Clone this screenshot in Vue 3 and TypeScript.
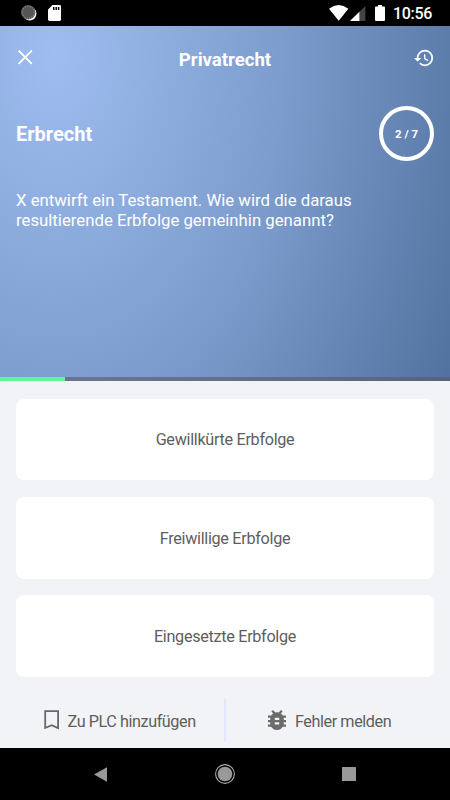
<script setup lang="ts">
import { ref } from 'vue'

const answers = ref<string[]>([
  'Gewillkürte Erbfolge',
  'Freiwillige Erbfolge',
  'Eingesetzte Erbfolge',
])
const progress = 14.5
</script>

<template>
  <div class="screen">
    <header class="status">
      <div class="status-left">
        <svg width="16" height="16" viewBox="0 0 16 16">
          <circle cx="8.7" cy="8.6" r="6.8" fill="#fff" />
          <circle cx="7.2" cy="7.2" r="7.2" fill="#555" />
          <circle cx="7.2" cy="7.2" r="6" fill="none" stroke="#888" stroke-width="1.1" stroke-dasharray="1.2 1.2" />
        </svg>
        <svg width="13" height="16" viewBox="0 0 13 16">
          <path d="M4.5 0H11.6Q13 0 13 1.4V14.6Q13 16 11.6 16H1.4Q0 16 0 14.6V4.5Z" fill="#fff" />
          <path d="M5.7 2V5M8.2 2V5M10.6 2V5" stroke="#000" stroke-width="1.5" />
        </svg>
      </div>
      <div class="status-right">
        <svg class="wifi" width="20" height="16" viewBox="0 0 20 16">
          <path d="M0 3.7Q9.7-3.5 19.4 3.7L9.7 15.7Z" fill="#fff" />
        </svg>
        <svg class="signal" width="16" height="15" viewBox="0 0 16 15">
          <path d="M15.4 0V15H0Z" fill="#444" />
          <path d="M9.4 5.8V15H0Z" fill="#fff" />
        </svg>
        <svg class="battery" width="10" height="16" viewBox="0 0 10 16">
          <path d="M3 0H7V1.5H9Q10 1.5 10 2.5V15Q10 16 9 16H1Q0 16 0 15V2.5Q0 1.5 1 1.5H3Z" fill="#fff" />
        </svg>
        <span class="clock">10:56</span>
      </div>
    </header>

    <section class="hero">
      <nav class="topbar">
        <svg class="close" width="16" height="16" viewBox="0 0 16 16">
          <path d="M1.6 1.6L14.8 14.8M14.8 1.6L1.6 14.8" stroke="#fff" stroke-width="1.9" />
        </svg>
        <h1>Privatrecht</h1>
        <svg class="history" width="22" height="22" viewBox="0 0 24 24" fill="#fff">
          <path d="M13 3a9 9 0 0 0-9 9H1l3.89 3.89.07.14L9 12H6c0-3.87 3.13-7 7-7s7 3.13 7 7-3.13 7-7 7c-1.93 0-3.68-.79-4.94-2.06l-1.42 1.42A8.954 8.954 0 0 0 13 21a9 9 0 0 0 0-18zm-1 5v5l4.28 2.54.72-1.21-3.5-2.08V8H12z" />
        </svg>
      </nav>
      <div class="subject">
        <h2>Erbrecht</h2>
        <div class="counter">2 / 7</div>
      </div>
      <p class="question">X entwirft ein Testament. Wie wird die daraus<br />resultierende Erbfolge gemeinhin genannt?</p>
      <div class="track"><div class="fill" :style="{ width: progress + '%' }"></div></div>
    </section>

    <main class="answers">
      <button v-for="answer in answers" :key="answer" class="answer">{{ answer }}</button>
    </main>

    <footer class="actions">
      <div class="action save">
        <svg width="16" height="20" viewBox="0 0 16 20">
          <path d="M1.2 1.2H14.1V18L7.7 15.2L1.2 18Z" fill="none" stroke="#666967" stroke-width="1.8" />
        </svg>
        <span>Zu PLC hinzufügen</span>
      </div>
      <div class="divider"></div>
      <div class="action report">
        <svg width="18" height="20" viewBox="4 3 16 18" preserveAspectRatio="none" fill="#6b6b6b">
          <path d="M20 8h-2.81a5.985 5.985 0 0 0-1.82-1.96L17 4.41 15.59 3l-2.17 2.17a6.002 6.002 0 0 0-2.83 0L8.41 3 7 4.41l1.62 1.63C7.88 6.55 7.26 7.22 6.81 8H4v2h2.09c-.05.33-.09.66-.09 1v1H4v2h2v1c0 .34.04.67.09 1H4v2h2.81c1.04 1.79 2.97 3 5.19 3s4.15-1.21 5.19-3H20v-2h-2.09c.05-.33.09-.66.09-1v-1h2v-2h-2v-1c0-.34-.04-.67-.09-1H20V8zm-6 8h-4v-2h4v2zm0-4h-4v-2h4v2z" />
        </svg>
        <span>Fehler melden</span>
      </div>
    </footer>

    <div class="navbar">
      <svg width="13" height="15" viewBox="0 0 13 15"><path d="M13 .3V14.7L0 7.5Z" fill="#999" /></svg>
      <svg width="20" height="20" viewBox="0 0 20 20">
        <circle cx="10" cy="10" r="7.3" fill="#999" />
        <circle cx="10" cy="10" r="9.4" fill="none" stroke="#aaa" stroke-width="1.1" />
      </svg>
      <svg width="14" height="14" viewBox="0 0 14 14"><rect width="14" height="14" rx=".6" fill="#999" /></svg>
    </div>
  </div>
</template>

<style>
body {
  margin: 0;
  background: #f2f3f7;
}
</style>

<style scoped>
.screen {
  width: 450px;
  height: 800px;
  display: flex;
  flex-direction: column;
  overflow: hidden;
  background: #f2f3f7;
  font-family: Roboto, "Liberation Sans", sans-serif;
}
svg {
  display: block;
  flex: none;
}
.status {
  height: 26px;
  flex: none;
  box-sizing: border-box;
  padding: 0 18px 0 21px;
  background: #000;
  display: flex;
  justify-content: space-between;
  align-items: center;
}
.status-left {
  display: flex;
  gap: 11px;
}
.status-right {
  display: flex;
  align-items: center;
  color: #fff;
}
.signal {
  margin-left: 1px;
}
.battery {
  margin-left: 9px;
}
.clock {
  width: 39px;
  margin-left: 8px;
  font-size: 16px;
  font-weight: 500;
  letter-spacing: -0.3px;
  line-height: 18px;
  padding-top: 2px;
  white-space: nowrap;
}
.hero {
  height: 355px;
  flex: none;
  display: flex;
  flex-direction: column;
  color: #fff;
  background: radial-gradient(ellipse 460px 700px at 55px 28px, #9fbdf0 0%, #7c9ccd 50%, #4f709c 100%);
}
.topbar {
  height: 64px;
  flex: none;
  padding: 0 15px 0 17px;
  display: flex;
  align-items: center;
  justify-content: space-between;
}
.topbar h1 {
  margin: 4px 0 0 4px;
  font-size: 18.6px;
  line-height: 22px;
  font-weight: 700;
}
.close {
  margin-top: -2px;
}
.subject {
  height: 88px;
  flex: none;
  padding: 0 16px;
  display: flex;
  align-items: center;
  justify-content: space-between;
}
.subject h2 {
  margin: 0;
  font-size: 20px;
  font-weight: 700;
}
.counter {
  width: 55px;
  height: 55px;
  margin-top: -1px;
  box-sizing: border-box;
  border: 4px solid #fff;
  border-radius: 50%;
  display: flex;
  align-items: center;
  justify-content: center;
  font-size: 11.4px;
  font-weight: 700;
}
.question {
  margin: 12px 16px 0;
  font-size: 16.75px;
  line-height: 20px;
  white-space: nowrap;
}
.track {
  height: 4px;
  margin-top: auto;
  background: rgba(88, 88, 100, 0.6);
}
.fill {
  height: 100%;
  background: #65f198;
}
.answers {
  flex: none;
  padding: 17.5px 16px 0;
  display: flex;
  flex-direction: column;
  gap: 16.6px;
}
.answer {
  height: 81.8px;
  border: 0;
  padding: 2px 0 0;
  border-radius: 8px;
  background: #fff;
  color: #5e5e5e;
  font: 400 16.2px/20px Roboto, "Liberation Sans", sans-serif;
  letter-spacing: -0.3px;
}
.actions {
  flex: 1;
  padding-top: 15px;
  display: flex;
  align-items: center;
  color: #5e5e5e;
  font-size: 16.2px;
  letter-spacing: -0.42px;
}
.action {
  display: flex;
  align-items: center;
  box-sizing: border-box;
  white-space: nowrap;
}
.action span {
  padding-top: 2px;
}
.save {
  width: 224px;
  padding-left: 43.5px;
  gap: 8px;
}
.report {
  flex: 1;
  padding-left: 42px;
  gap: 9px;
}
.divider {
  width: 2px;
  height: 43px;
  background: #e3e7fb;
}
.navbar {
  height: 52px;
  flex: none;
  box-sizing: border-box;
  padding: 0 94px;
  background: #000;
  display: flex;
  align-items: center;
  justify-content: space-between;
}
</style>
